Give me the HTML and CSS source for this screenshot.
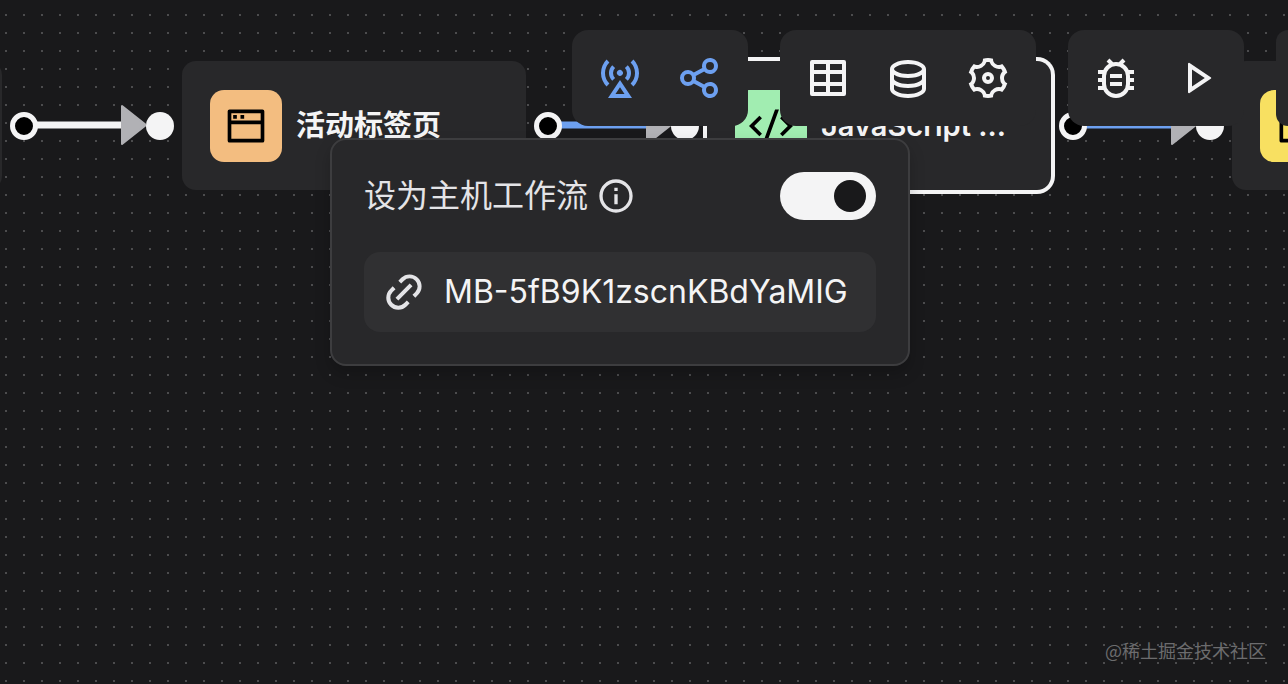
FILE: index.html
```html
<!DOCTYPE html>
<html lang="zh-CN">
<head>
    <meta charset="UTF-8">
    <meta name="viewport" content="width=device-width, initial-scale=1.0">
    <title>工作流</title>
    <link rel="stylesheet" href="styles.css">
</head>
<body>

<main class="canvas">
    <!-- Edges -->
    <svg class="edge edge-1" viewBox="0 0 110 42" aria-hidden="true">
        <path class="line" d="M0 21h86"/>
        <path class="arrow" d="M86 2v38l24-19z"/>
    </svg>
    <svg class="edge edge-2 active" viewBox="0 0 110 42" aria-hidden="true">
        <path class="line" d="M0 21h86"/>
        <path class="arrow" d="M86 2v38l24-19z"/>
    </svg>
    <svg class="edge edge-3 active" viewBox="0 0 110 42" aria-hidden="true">
        <path class="line" d="M0 21h86"/>
        <path class="arrow" d="M86 2v38l24-19z"/>
    </svg>

    <!-- Blocks -->
    <div class="node node-0">
        <span class="handle source"></span>
    </div>
    <div class="node node-1">
        <span class="handle target"></span>
        <span class="node-icon orange">
            <svg viewBox="0 0 24 24"><path d="M21 3a1 1 0 0 1 1 1v16a1 1 0 0 1-1 1H3a1 1 0 0 1-1-1V4a1 1 0 0 1 1-1h18zm-1 8H4v8h16v-8zm0-6H4v4h16V5zM5 6h2v2H5V6zm4 0h2v2H9V6z"/></svg>
        </span>
        <span class="node-name">活动标签页</span>
        <span class="handle source"></span>
    </div>
    <div class="node node-2 selected">
        <span class="handle target"></span>
        <span class="node-icon green">
            <svg viewBox="0 0 24 24"><path d="M24 12l-5.657 5.657-1.414-1.414L21.172 12l-4.243-4.243 1.414-1.414L24 12zM2.828 12l4.243 4.243-1.414 1.414L0 12l5.657-5.657L7.07 7.757 2.828 12zm6.96 9H7.66l6.552-18h2.128L9.788 21z"/></svg>
        </span>
        <span class="node-name">JavaScript ...</span>
        <span class="handle source"></span>
    </div>
    <div class="node node-3">
        <span class="handle target"></span>
        <span class="node-icon yellow">
            <svg viewBox="0 0 24 24"><path d="M4 3h16a1 1 0 0 1 1 1v16a1 1 0 0 1-1 1H4a1 1 0 0 1-1-1V4a1 1 0 0 1 1-1zm1 2v14h14V5H5z"/></svg>
        </span>
    </div>
</main>

<header class="toolbars">
    <div class="toolbar">
        <div class="host">
            <button class="tool active" type="button" aria-label="主机工作流" aria-expanded="true">
                <svg viewBox="0 0 24 24"><path d="M12 13l6 9H6l6-9zm0 3.6L9.74 20h4.52L12 16.6zm-1.06-6.04a1.5 1.5 0 1 1 2.12-2.12 1.5 1.5 0 0 1-2.12 2.12zM5.28 2.78l1.41 1.41a7.5 7.5 0 0 0 0 10.6l-1.41 1.43a9.5 9.5 0 0 1 0-13.44zm13.44 0a9.5 9.5 0 0 1 0 13.44l-1.41-1.41a7.5 7.5 0 0 0 0-10.61l1.41-1.42zM8.11 5.6l1.42 1.42a3.5 3.5 0 0 0 0 4.95l-1.42 1.42a5.5 5.5 0 0 1 0-7.79zm7.78 0a5.5 5.5 0 0 1 0 7.79l-1.42-1.42a3.5 3.5 0 0 0 0-4.95l1.42-1.42z"/></svg>
            </button>
            <div class="popover">
                <div class="popover-row">
                    <label for="host-switch">设为主机工作流</label>
                    <svg class="info" viewBox="0 0 24 24"><path d="M12 22C6.477 22 2 17.523 2 12S6.477 2 12 2s10 4.477 10 10-4.477 10-10 10zm0-2a8 8 0 1 0 0-16 8 8 0 0 0 0 16zM11 7h2v2h-2V7zm0 4h2v6h-2v-6z"/></svg>
                    <input class="switch" id="host-switch" type="checkbox" role="switch" checked>
                </div>
                <div class="host-id">
                    <svg viewBox="0 0 24 24"><path d="M17.657 14.828l-1.414-1.414L17.657 12A4 4 0 1 0 12 6.343l-1.414 1.414-1.414-1.414 1.414-1.414a6 6 0 0 1 8.485 8.485l-1.414 1.414zm-2.829 2.829l-1.414 1.414a6 6 0 1 1-8.485-8.485l1.414-1.414 1.414 1.414L6.343 12A4 4 0 1 0 12 17.657l1.414-1.414 1.414 1.414zm0-9.9l1.415 1.415-7.071 7.07-1.415-1.414 7.071-7.07z"/></svg>
                    <input type="text" aria-label="主机 ID" value="MB-5fB9K1zscnKBdYaMIG" readonly>
                </div>
            </div>
        </div>
        <button class="tool active" type="button" aria-label="分享">
            <svg viewBox="0 0 24 24"><path d="M13.12 17.023l-4.199-2.29a4 4 0 1 1 0-5.465l4.2-2.29a4 4 0 1 1 .959 1.755l-4.2 2.29a4.008 4.008 0 0 1 0 1.954l4.199 2.29a4 4 0 1 1-.959 1.755zM6 14a2 2 0 1 0 0-4 2 2 0 0 0 0 4zm11-6a2 2 0 1 0 0-4 2 2 0 0 0 0 4zm0 12a2 2 0 1 0 0-4 2 2 0 0 0 0 4z"/></svg>
        </button>
    </div>
    <div class="toolbar">
        <button class="tool" type="button" aria-label="表格">
            <svg viewBox="0 0 24 24"><path d="M13 10v4h6v-4h-6zm-2 0H5v4h6v-4zm2 9h6v-3h-6v3zm-2 0v-3H5v3h6zm2-14v3h6V5h-6zm-2 0H5v3h6V5zM4 3h16a1 1 0 0 1 1 1v16a1 1 0 0 1-1 1H4a1 1 0 0 1-1-1V4a1 1 0 0 1 1-1z"/></svg>
        </button>
        <button class="tool" type="button" aria-label="全局数据">
            <svg viewBox="0 0 24 24"><path d="M5 12.5c0 .313.461.858 1.53 1.393C7.914 14.585 9.877 15 12 15c2.123 0 4.086-.415 5.47-1.107 1.069-.535 1.53-1.08 1.53-1.393v-2.171C17.35 11.349 14.827 12 12 12s-5.35-.652-7-1.671V12.5zm14 2.829C17.35 16.349 14.827 17 12 17s-5.35-.652-7-1.671V17.5c0 .313.461.858 1.53 1.393C7.914 19.585 9.877 20 12 20c2.123 0 4.086-.415 5.47-1.107 1.069-.535 1.53-1.08 1.53-1.393v-2.171zM3 17.5v-10C3 5.015 7.03 3 12 3s9 2.015 9 4.5v10c0 2.485-4.03 4.5-9 4.5s-9-2.015-9-4.5zm9-7.5c2.123 0 4.086-.415 5.47-1.107C18.539 8.358 19 7.813 19 7.5c0-.313-.461-.858-1.53-1.393C16.086 5.415 14.123 5 12 5c-2.123 0-4.086.415-5.47 1.107C5.461 6.642 5 7.187 5 7.5c0 .313.461.858 1.53 1.393C7.914 9.585 9.877 10 12 10z"/></svg>
        </button>
        <button class="tool" type="button" aria-label="设置">
            <svg viewBox="0 0 24 24"><path d="M3.34 17a10.018 10.018 0 0 1-.978-2.326 3 3 0 0 0 .002-5.347A9.99 9.99 0 0 1 4.865 4.99a3 3 0 0 0 4.631-2.674 9.99 9.99 0 0 1 5.007.002 3 3 0 0 0 4.632 2.672c.579.59 1.093 1.261 1.525 2.01.433.749.757 1.53.978 2.326a3 3 0 0 0-.002 5.347 9.99 9.99 0 0 1-2.501 4.337 3 3 0 0 0-4.631 2.674 9.99 9.99 0 0 1-5.007-.002 3 3 0 0 0-4.632-2.672A10.018 10.018 0 0 1 3.34 17zm5.66.196a4.993 4.993 0 0 1 2.25 2.77c.499.047 1 .048 1.499.001A4.993 4.993 0 0 1 15 17.197a4.993 4.993 0 0 1 3.525-.565c.29-.408.54-.843.748-1.298A4.993 4.993 0 0 1 18 12c0-1.26.47-2.437 1.273-3.334a8.126 8.126 0 0 0-.75-1.298A4.993 4.993 0 0 1 15 6.804a4.993 4.993 0 0 1-2.25-2.77c-.499-.047-1-.048-1.499-.001A4.993 4.993 0 0 1 9 6.803a4.993 4.993 0 0 1-3.525.565 7.99 7.99 0 0 0-.748 1.298A4.993 4.993 0 0 1 6 12c0 1.26-.47 2.437-1.273 3.334a8.126 8.126 0 0 0 .75 1.298A4.993 4.993 0 0 1 9 17.196zM12 15a3 3 0 1 1 0-6 3 3 0 0 1 0 6zm0-2a1 1 0 1 0 0-2 1 1 0 0 0 0 2z"/></svg>
        </button>
    </div>
    <div class="toolbar">
        <button class="tool" type="button" aria-label="调试">
            <svg class="outline" viewBox="0 0 24 24"><rect x="6" y="5" width="12" height="16" rx="6"/><path d="M8 3l2 2M16 3l-2 2M9 11h6M9 15h6M3 9h3.500M3 13h3M3 17h3.500M17.500 9H21M18 13h3M17.500 17H21"/></svg>
        </button>
        <button class="tool" type="button" aria-label="运行">
            <svg viewBox="0 0 24 24"><path d="M16.394 12L10 7.737v8.526L16.394 12zm2.982.416L8.777 19.482A.5.5 0 0 1 8 19.066V4.934a.5.5 0 0 1 .777-.416l10.599 7.066a.5.5 0 0 1 0 .832z"/></svg>
        </button>
    </div>
    <div class="toolbar toolbar-more"></div>
</header>

<div class="watermark">@稀土掘金技术社区</div>

</body>
</html>
```

FILE: styles.css
```css
* {
    box-sizing: border-box;
}

body {
    position: relative;
    min-height: 100vh;
    margin: 0;
    overflow: hidden;
    font-family: Inter, "Noto Sans CJK SC", sans-serif;
    color: #f4f4f5;
    background-color: #19191b;
    background-image: radial-gradient(circle at 6px 15px, #4c4c4e 1px, transparent 1px);
    background-size: 18px 18px;
}

svg {
    display: block;
    fill: currentColor;
}

/* Workflow canvas */
.canvas {
    position: absolute;
    inset: 0;
    overflow: hidden;
}

.node {
    position: absolute;
    top: 61px;
    width: 344px;
    height: 129px;
    display: flex;
    align-items: center;
    gap: 14px;
    padding: 0 28px;
    border-radius: 14px;
    background-color: #28282a;
}

.node-0 {
    left: -342px;
}

.node-1 {
    left: 182px;
}

.node-2 {
    left: 707px;
}

.node-3 {
    left: 1232px;
}

.node.selected {
    box-shadow: 0 0 0 4px #f4f4f5;
}

.node-icon {
    flex: none;
    display: flex;
    align-items: center;
    justify-content: center;
    width: 72px;
    height: 72px;
    border-radius: 14px;
    color: #000;
}

.node-icon svg {
    width: 44px;
    height: 44px;
}

.orange {
    background-color: #f3bd80;
}

.green {
    background-color: #a1edb1;
}

.yellow {
    background-color: #f8e061;
}

.node-name {
    font-size: 29px;
    font-weight: 600;
    line-height: 40px;
    white-space: nowrap;
}

.handle {
    position: absolute;
    top: 50%;
    width: 28px;
    height: 28px;
    border-radius: 50%;
    transform: translateY(-50%);
    background-color: #f4f4f5;
}

.target {
    left: -36px;
}

.source {
    right: -36px;
    border: 5px solid #f4f4f5;
    background-color: #000;
}

.edge {
    position: absolute;
    top: 104px;
    width: 110px;
    height: 42px;
    color: #f4f4f5;
}

.edge.active {
    color: #6da0f0;
}

.edge-1 {
    left: 36px;
}

.edge-2 {
    left: 561px;
}

.edge-3 {
    left: 1086px;
}

.line {
    stroke: currentColor;
    stroke-width: 7;
}

.arrow {
    fill: #b1b1b5;
    stroke: #b1b1b5;
    stroke-width: 2;
    stroke-linejoin: round;
}

/* Toolbars */
.toolbars {
    position: relative;
    display: flex;
    gap: 32px;
    padding: 30px 0 0 572px;
}

.toolbar {
    flex: none;
    display: flex;
    padding: 8px;
    border-radius: 16px;
    background-color: #28282a;
}

.toolbar-more {
    flex: 1;
    padding: 0;
    border-radius: 16px 0 0 16px;
}

.tool {
    display: flex;
    align-items: center;
    justify-content: center;
    width: 80px;
    height: 80px;
    padding: 0;
    border: 0;
    border-radius: 12px;
    color: #f4f4f5;
    background: none;
    cursor: pointer;
}

.tool svg {
    width: 48px;
    height: 48px;
}

.tool.active {
    color: #6da0f0;
}

.outline {
    fill: none;
    stroke: currentColor;
    stroke-width: 2;
}

/* Host workflow popover */
.host {
    position: relative;
}

.popover {
    position: absolute;
    top: 100px;
    left: 50%;
    width: 580px;
    padding: 32px;
    border: 2px solid #3d3d3f;
    border-radius: 16px;
    transform: translateX(-50%);
    background-color: #28282a;
    box-shadow: 0 8px 16px rgba(0, 0, 0, 0.2);
}

.popover-row {
    display: flex;
    align-items: center;
    gap: 8px;
    margin-bottom: 32px;
    font-size: 32px;
    line-height: 48px;
    color: #e4e4e7;
}

.info {
    width: 40px;
    height: 40px;
}

.switch {
    appearance: none;
    width: 96px;
    height: 48px;
    margin: 0 0 0 auto;
    padding: 8px 10px;
    border-radius: 24px;
    background-color: #f4f4f5;
    cursor: pointer;
}

.switch::before {
    content: "";
    display: block;
    width: 32px;
    height: 32px;
    border-radius: 50%;
    background-color: #19191b;
}

.switch:checked::before {
    margin-left: auto;
}

.host-id {
    display: flex;
    align-items: center;
    gap: 16px;
    height: 80px;
    padding: 0 16px;
    border-radius: 16px;
    background-color: #303032;
}

.host-id svg {
    flex: none;
    width: 48px;
    height: 48px;
    color: #e4e4e7;
}

.host-id input {
    flex: 1;
    min-width: 0;
    padding: 0;
    border: 0;
    outline: 0;
    font: inherit;
    font-size: 32px;
    line-height: 48px;
    color: #f4f4f5;
    background: none;
}

.watermark {
    position: absolute;
    right: 22px;
    bottom: 20px;
    font-family: "Noto Sans CJK SC", sans-serif;
    font-size: 18px;
    line-height: 28px;
    color: #6c6c6e;
}
```
